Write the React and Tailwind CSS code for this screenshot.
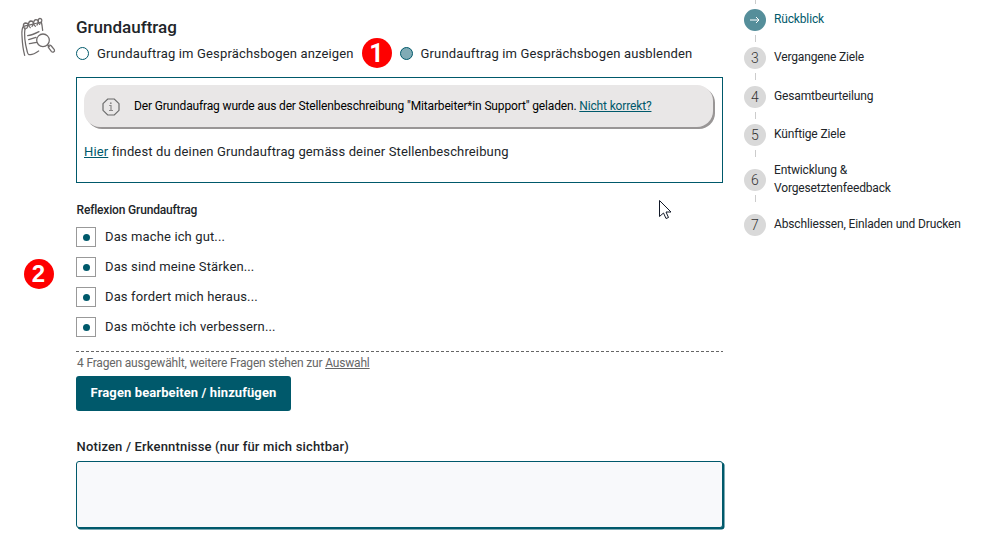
import React from 'react';

const questions = [
  'Das mache ich gut...',
  'Das sind meine Stärken...',
  'Das fordert mich heraus...',
  'Das möchte ich verbessern...',
];

function NotepadIcon() {
  return (
    <svg width="36" height="42" viewBox="60 51 108 126" fill="none" stroke="#6f6b6b" strokeWidth="3.800" strokeLinecap="round" strokeLinejoin="round">
      <path d="M71 78C64 86 65 96 66 108C67 130 69 148 74 166" />
      <path d="M75 84C72 104 76 134 82 156C84 166 88 165 96 163C104 162 110 156 116 153" />
      <path d="M71 79C86 75 104 72 124 66C126 74 127 82 128 91" />
      <path d="M76 87C68 82 68 70 77 69C86 69 86 78 80 85" />
      <path d="M91 83C83 78 84 64 93 63C101 63 102 72 96 79" />
      <path d="M106 79C98 74 100 60 108 59C116 59 117 68 111 75" />
      <path d="M119 73C112 67 114 55 120 55C127 56 127 64 122 69" />
      <path d="M83 107C95 106 105 101 117 95M86 119L108 112M88 131C96 131 102 128 110 127" />
      <circle cx="129" cy="121" r="19" />
      <path d="M143 135L148 140M145 142C143 136 150 133 154 138L163 149C166 155 158 159 154 154Z" />
    </svg>
  );
}

function InfoIcon() {
  return (
    <svg width="18" height="18" viewBox="0 0 18 18" fill="none" stroke="#6b6b6b" strokeWidth="1.200">
      <path d="M5.700 1H12.300L17 5.700V12.300L12.300 17H5.700L1 12.300V5.700Z" />
      <path d="M7.200 7.500H9V12.500M7 12.500H11" stroke="#8a8888" />
      <circle cx="8.800" cy="5.200" r=".9" fill="#8a8888" stroke="none" />
    </svg>
  );
}

function Badge({ children }) {
  return (
    <span className="flex size-[30px] items-center justify-center rounded-full bg-[#fe0000] text-[25px] leading-none font-bold tracking-normal text-white">
      {children}
    </span>
  );
}

function Step({ mark, height, line, active, children }) {
  return (
    <div className={`flex ${height}`}>
      <div className="flex w-[22px] shrink-0 flex-col items-center">
        <span className={`flex size-[22px] shrink-0 items-center justify-center rounded-full text-[14px] leading-none ${active ? 'bg-[#558e9a] text-white' : 'bg-[#d9d9d9] font-light text-[#333]'}`}>
          {mark}
        </span>
        {line && <span className="mt-[4px] ml-[1px] h-[7px] w-px shrink-0 bg-[#ccc]" />}
      </div>
      <div className={`ml-2 flex h-[20px] items-center text-[12px] leading-[18px] tracking-[-0.15px] ${active ? 'text-[#00596b]' : 'text-[#212529]'}`}>
        {children}
      </div>
    </div>
  );
}

export default function App() {
  return (
    <div className="relative flex h-[545px] w-[986px] overflow-hidden bg-white font-['Roboto',sans-serif] text-[#212529]">
      <aside className="w-[76px] shrink-0 pt-[17px] pl-5">
        <NotepadIcon />
        <div className="mt-[200px] ml-[3.500px]">
          <span className="flex size-[30px] items-center justify-center rounded-full bg-[#fe0000] font-['Liberation_Sans',Arial,sans-serif] text-[24px] leading-none font-bold text-white">
            2
          </span>
        </div>
      </aside>

      <main className="w-[648px] shrink-0">
        <h1 className="mt-[17px] h-5 text-[17px] leading-5 font-medium">Grundauftrag</h1>
        <div className="flex h-8 items-center text-[13px] tracking-[0.16px] whitespace-nowrap">
          <span className="size-[13px] rounded-full border border-[#00596b]" />
          <span className="ml-2 w-[264.500px] pt-px">Grundauftrag im Gesprächsbogen anzeigen</span>
          <Badge>1</Badge>
          <span className="ml-2 size-[13px] rounded-full border border-[#00596b] bg-[#80abb5]" />
          <span className="ml-2 pt-px">Grundauftrag im Gesprächsbogen ausblenden</span>
        </div>

        <section className="mt-2 h-[106px] w-[647px] border border-[#00596b] px-[7px] pt-[7px]">
          <div className="flex h-[42px] w-[629px] items-center rounded-[16px] bg-[#e9e7e7] pl-[18px] text-[12px] tracking-[-0.15px] text-black shadow-[2px_2px_0_#999696]">
            <span className="pt-0.5">
              <InfoIcon />
            </span>
            <p className="ml-[14px] whitespace-nowrap">
              Der Grundaufrag wurde aus der Stellenbeschreibung "Mitarbeiter*in Support" geladen.{' '}
              <a className="text-[#00596b] underline">Nicht korrekt?</a>
            </p>
          </div>
          <p className="mt-[15px] text-[13px] leading-5 tracking-[0.135px]">
            <a className="text-[#00596b] underline">Hier</a> findest du deinen Grundauftrag gemäss deiner Stellenbeschreibung
          </p>
        </section>

        <h2 className="mt-[19px] ml-[0.500px] h-4 text-[12px] leading-4 font-medium tracking-[-0.17px]">Reflexion Grundauftrag</h2>
        <ul className="mt-[9px] flex flex-col gap-[10px]">
          {questions.map((q) => (
            <li key={q} className="flex h-5 items-center text-[13px] tracking-[0.13px]">
              <span className="flex size-5 items-center justify-center border border-[#999]">
                <span className="size-[7px] rounded-full bg-[#00596b]" />
              </span>
              <span className="ml-[9px]">{q}</span>
            </li>
          ))}
        </ul>
        <svg className="mt-[14px] block" width="647" height="1">
          <path d="M0 .5H647" stroke="#666" strokeDasharray="3 2" />
        </svg>
        <p className="mt-[3px] ml-[1px] h-4 text-[12px] leading-4 tracking-[-0.17px] text-[#666]">
          4 Fragen ausgewählt, weitere Fragen stehen zur <a className="underline">Auswahl</a>
        </p>
        <button className="mt-[5px] block h-[35px] w-[215px] rounded-[3px] bg-[#00596b] pb-0.5 text-[13px] font-bold tracking-[0.1px] whitespace-nowrap text-white">
          Fragen bearbeiten / hinzufügen
        </button>
        <label className="mt-[28px] ml-[0.500px] block h-4 text-[13px] leading-4 font-medium tracking-[0.16px]">
          Notizen / Erkenntnisse (nur für mich sichtbar)
        </label>
        <div className="mt-[6px] h-[67px] w-[647px] rounded-[3px] border border-[#00596b] bg-[#f8f9fb] shadow-[1.500px_1.500px_0_#00596b]" />
      </main>

      <nav className="ml-5 w-[240px] shrink-0">
        <div className="ml-[11px] h-1 w-px bg-[#ccc]" />
        <div className="pt-[5px]">
          <Step
            active
            line
            height="h-[38px]"
            mark={
              <svg width="10" height="8" viewBox="0 0 10 8" fill="none" stroke="white" strokeWidth="1">
                <path d="M0 4H9M6 1L9 4L6 7" />
              </svg>
            }
          >
            Rückblick
          </Step>
          <Step mark="3" line height="h-[38.500px]">Vergangene Ziele</Step>
          <Step mark="4" line height="h-[38.500px]">Gesamtbeurteilung</Step>
          <Step mark="5" line height="h-[45px]">Künftige Ziele</Step>
          <Step mark="6" line height="h-[45px]">
            <span>
              Entwicklung &amp;
              <br />
              Vorgesetztenfeedback
            </span>
          </Step>
          <Step mark="7" height="h-[38px]">Abschliessen, Einladen und Drucken</Step>
        </div>
      </nav>

      <svg className="absolute top-[199px] left-[658px]" width="14" height="21" viewBox="0 0 14 21" fill="white" stroke="#111827" strokeWidth="1">
        <path d="M1.500 1.500V17.500L5.500 14L8 19.500L10.500 18.500L8 13H13Z" />
      </svg>
    </div>
  );
}
